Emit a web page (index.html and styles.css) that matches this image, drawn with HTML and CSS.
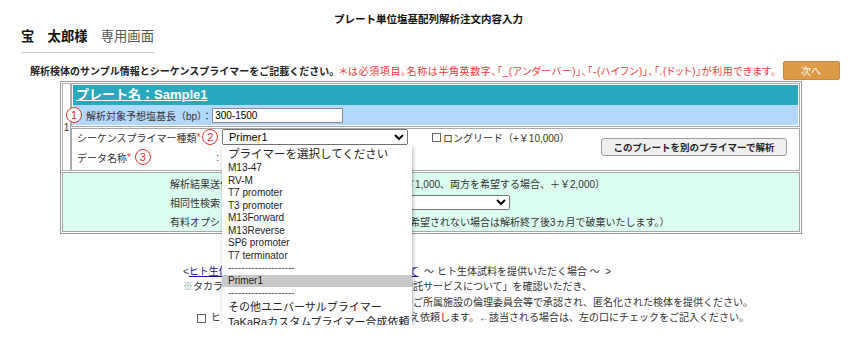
FILE: index.html
```html
<!DOCTYPE html>
<html lang="ja">
<head>
    <meta charset="UTF-8">
    <meta name="viewport" content="width=device-width, initial-scale=1.0">
    <title>プレート単位塩基配列解析注文内容入力</title>
    <link rel="stylesheet" href="styles.css">
</head>
<body>

<h1 class="pageTitle">プレート単位塩基配列解析注文内容入力</h1>

<div class="userBar">
    <div class="userName"><b>宝　太郎様</b>　専用画面</div>
</div>

<div class="notice">
    <p class="noticeText"><b>解析検体のサンプル情報とシーケンスプライマーをご記載ください。</b><span class="req">＊は必須項目。名称は半角英数字、「_(アンダーバー)」、「-(ハイフン)」、「.(ドット)」が利用できます。</span></p>
    <button class="nextBtn">次へ</button>
</div>

<div class="plateTable">
    <div class="plateRow">
        <div class="plateNo">1</div>
        <div class="plateBody">
            <div class="plateHead">
                <div class="plateName">プレート名：Sample1</div>
                <div class="lengthRow">
                    <span class="mark markFirst">1</span>
                    <label for="length">解析対象予想塩基長（bp）：</label>
                    <input type="text" id="length" class="lengthInput" value="300-1500">
                </div>
            </div>

            <div class="primerBox">
                <div class="fieldLabel">シーケンスプライマー種類<span class="star">*</span><span class="mark markSecond">2</span></div>
                <div class="primerSelect">
                    <select class="selectBox">
                        <option>Primer1</option>
                    </select>
                    <div class="primerList">
                        <div class="opt optFirst">プライマーを選択してください</div>
                        <div class="opt">M13-47</div>
                        <div class="opt">RV-M</div>
                        <div class="opt">T7 promoter</div>
                        <div class="opt">T3 promoter</div>
                        <div class="opt">M13Forward</div>
                        <div class="opt">M13Reverse</div>
                        <div class="opt">SP6 promoter</div>
                        <div class="opt">T7 terminator</div>
                        <div class="opt optDash">--------------------</div>
                        <div class="opt optActive">Primer1</div>
                        <div class="opt optDash">--------------------</div>
                        <div class="opt optWide">その他ユニバーサルプライマー</div>
                        <div class="opt optWide">TaKaRaカスタムプライマー合成依頼</div>
                    </div>
                </div>
                <div class="longRead">
                    <input type="checkbox" class="check" id="longread">
                    <label for="longread">ロングリード（+￥10,000）</label>
                </div>
                <button class="otherPrimerBtn">このプレートを別のプライマーで解析</button>

                <div class="fieldLabel">データ名称<span class="star">*</span><span class="mark markThird">3</span><span class="colon">:</span></div>
                <div>
                    <input type="text" class="dataInput">
                </div>
            </div>
        </div>
    </div>

    <div class="optionBox">
        <div class="optRow">解析結果送付方法：メール送付またはCD-R郵送（＋￥1,000、両方を希望する場合、＋￥2,000）</div>
        <div class="optRow">相同性検索<select class="homologySelect"><option></option></select></div>
        <div class="optRow">有料オプション：試料返却を希望する（＋￥3,000）（希望されない場合は解析終了後3ヵ月で破棄いたします。）</div>
    </div>
</div>

<div class="humanNote">
    <div>&lt;<a href="#">ヒト生体試料を使用する解析受託サービスについて</a>&nbsp;&nbsp;～&nbsp;ヒト生体試料を提供いただく場合&nbsp;～&nbsp;&nbsp;&gt;</div>
    <div><span class="kome">※</span>タカラバイオの「ヒト生体試料を使用した解析受託サービスについて」を確認いただき、</div>
    <div class="indent">試料提供者から適切な同意を取得した上でご所属施設の倫理委員会等で承認され、匿名化された検体を提供ください。</div>
    <div class="agree"><input type="checkbox" class="check"> ヒト生体試料の提供について、同意を得たうえ依頼します。←該当される場合は、左の口にチェックをご記入ください。</div>
</div>

</body>
</html>
```

FILE: styles.css
```css
body {
    font-family: "Liberation Sans", "Noto Sans CJK JP", sans-serif;
    font-size: 10px;
    color: #333;
    margin: 0;
    padding: 0;
}
.pageTitle {
    margin: 0;
    padding-top: 12px;
    font-size: 10.5px;
    line-height: 14px;
    text-align: center;
    color: #111;
}
.userBar {
    margin-top: 2px;
    padding-left: 21px;
}
.userName {
    display: inline-block;
    font-size: 13.3px;
    line-height: 18px;
    padding-bottom: 6px;
    border-bottom: 1px solid #c8c8c8;
    color: #555;
}
.userName b {
    color: #111;
}
.notice {
    display: flex;
    align-items: center;
    margin: 7px 0 0 30px;
    height: 20px;
}
.noticeText {
    margin: 0;
    white-space: nowrap;
    color: #222;
}
.req {
    color: #f03a3a;
    font-feature-settings: "palt";
    letter-spacing: 0.6px;
}
.nextBtn {
    margin-left: 6px;
    width: 57px;
    height: 19px;
    padding: 0;
    background: #de9b46;
    border: 1px solid #c98a3a;
    border-radius: 2px;
    color: #fff;
    font-family: inherit;
    font-size: 10px;
}

/* plate table */
.plateTable {
    margin: 1px 0 0 60px;
    width: 742px;
    box-sizing: border-box;
    border: 1px solid #9a9a9a;
    padding: 1px;
}
.plateRow {
    display: flex;
}
.plateNo {
    width: 9px;
    box-sizing: border-box;
    border: 1px solid #b0b0b0;
    display: flex;
    align-items: center;
    justify-content: center;
}
.plateBody {
    flex: 1;
    display: flex;
    flex-direction: column;
    gap: 1px;
}
.plateHead {
    border: 1px solid #a8a8a8;
    padding: 1px;
}
.plateName {
    background: #2aa8c0;
    height: 20px;
    line-height: 20px;
    padding-left: 3px;
    color: #fff;
    font-weight: bold;
    font-size: 13px;
    text-decoration: underline;
}
.lengthRow {
    position: relative;
    background: #b2d8fc;
    height: 20px;
    display: flex;
    align-items: center;
    padding-left: 13px;
}
.lengthInput {
    width: 131px;
    height: 15px;
    box-sizing: border-box;
    border: 1px solid #8a8a8a;
    padding: 0 2px;
    font-family: inherit;
    font-size: 10px;
}
.mark {
    display: inline-flex;
    align-items: center;
    justify-content: center;
    width: 16px;
    height: 16px;
    box-sizing: border-box;
    border: 1px solid #e53030;
    border-radius: 50%;
    color: #e53030;
    font-size: 11px;
    background: #fff;
}
.markFirst {
    position: absolute;
    left: -7px;
    top: 2px;
}
.markSecond {
    margin-left: 2px;
}
.markThird {
    margin-left: 4px;
}
.star {
    color: #e53030;
}

.primerBox {
    border: 1px solid #a8a8a8;
    display: grid;
    grid-template-columns: 145px 190px 1fr auto;
    grid-template-rows: 16px 16px;
    row-gap: 4px;
    padding: 0 12px 5px 5px;
}
.fieldLabel {
    display: flex;
    align-items: center;
    white-space: nowrap;
}
.colon {
    margin-left: auto;
    padding-right: 3px;
}
.primerSelect {
    position: relative;
}
.selectBox {
    width: 186px;
    height: 16px;
    padding: 0 2px;
    font-family: inherit;
    font-size: 11px;
}
.primerList {
    position: absolute;
    top: 16px;
    left: 0;
    width: 190px;
    z-index: 10;
    background: #fff;
    padding: 1px 0 3px;
    box-shadow: 1px 2px 4px rgba(0, 0, 0, 0.3);
    color: #222;
}
.opt {
    padding-left: 6px;
    line-height: 12.5px;
    font-size: 10px;
    white-space: nowrap;
}
.optFirst {
    font-size: 11.5px;
    line-height: 16px;
}
.optDash {
    color: #555;
}
.optActive {
    background: #c8c8c8;
}
.optWide {
    font-size: 11px;
    line-height: 15px;
}
.longRead {
    display: flex;
    align-items: center;
    padding-left: 20px;
}
.check {
    appearance: none;
    width: 9px;
    height: 9px;
    margin: 0 2px 0 0;
    border: 1px solid #666;
    background: #fff;
    vertical-align: middle;
}
.otherPrimerBtn {
    grid-row: 1 / 3;
    grid-column: 4;
    align-self: center;
    width: 186px;
    height: 18px;
    padding: 0;
    background: #efefef;
    border: 1px solid #9a9a9a;
    border-radius: 3px;
    color: #222;
    font-family: inherit;
    font-weight: bold;
    font-size: 9.5px;
}
.dataInput {
    width: 190px;
    height: 16px;
    box-sizing: border-box;
    border: 1px solid #8a8a8a;
}

.optionBox {
    margin-top: 1px;
    border: 1px solid #a8a8a8;
    background: #dcfcf0;
    padding: 1px 0 0 107px;
}
.optRow {
    height: 19px;
    display: flex;
    align-items: center;
    white-space: nowrap;
}
.homologySelect {
    margin-left: 10px;
    width: 280px;
    height: 15px;
}

/* notes below the table */
.humanNote {
    margin: 30px 0 0 183px;
    line-height: 15.3px;
    color: #333;
}
.humanNote a {
    color: #1a0dab;
}
.kome {
    color: #7aa890;
}
.indent {
    padding-left: 40px;
}
.agree {
    padding-left: 14px;
}
```
